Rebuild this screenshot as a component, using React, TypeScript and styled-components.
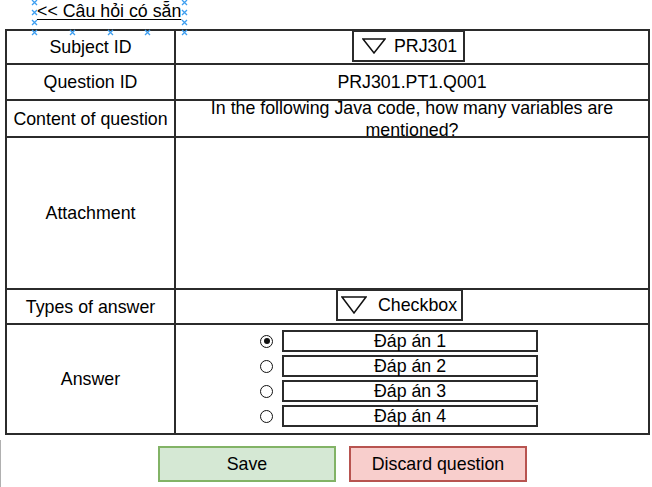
import styled, { createGlobalStyle } from "styled-components";

const GlobalStyle = createGlobalStyle`
  html, body {
    margin: 0;
    padding: 0;
    background: #fff;
  }
  body {
    font-family: "Liberation Sans", Arial, sans-serif;
    color: #000;
  }
`;

// Layout
const Page = styled.div`
  position: relative;
  width: 652px;
  height: 487px;
  padding-left: 5px;
  box-sizing: border-box;
  overflow: hidden;
`;

const TopBar = styled.div`
  height: 29px;
  padding: 1px 0 0 32px;
  box-sizing: border-box;
`;

const BackLink = styled.a`
  display: inline-block;
  font-size: 17.8px;
  line-height: 20px;
  color: #000;
  text-decoration: underline;
  text-underline-offset: 2px;
  cursor: pointer;
`;

const Markers = styled.div`
  position: absolute;
  left: 0;
  top: 0;
  width: 0;
  height: 0;
  pointer-events: none;
`;

const Marker = styled.svg<{ x: number; y: number }>`
  position: absolute;
  left: ${({ x }) => x - 3}px;
  top: ${({ y }) => y - 3}px;
  width: 7px;
  height: 7px;
  z-index: 5;
`;

const Table = styled.div`
  display: grid;
  grid-template-columns: 167px 472px;
  grid-template-rows: 32px 34px 35px 150px 33px 108px;
  gap: 2px;
  padding: 2px;
  width: 645px;
  box-sizing: border-box;
  background: #2b2b2b;
`;

const Cell = styled.div`
  background: #fff;
  display: flex;
  align-items: center;
  justify-content: center;
  text-align: center;
  font-size: 17.8px;
  line-height: 20px;
  min-width: 0;
`;

const QuestionText = styled.div`
  padding: 0 10px;
  line-height: 22px;
`;

const SelectCell = styled.div<{ left: number }>`
  background: #fff;
  display: flex;
  align-items: flex-start;
  padding-left: ${({ left }) => left}px;
`;

const Dropdown = styled.div<{ w: number; tri: number; textGap: number }>`
  width: ${({ w }) => w}px;
  height: 32px;
  margin-top: -1px;
  border: 2px solid #2b2b2b;
  box-sizing: border-box;
  display: flex;
  align-items: center;
  padding-left: ${({ tri }) => tri}px;
  gap: ${({ textGap }) => textGap}px;
  font-size: 17.8px;
  background: #fff;
`;

const AnswerCell = styled.div`
  background: #fff;
  display: flex;
  flex-direction: column;
  gap: 3px;
  padding: 5px 0 0 84px;
`;

const AnswerRow = styled.div`
  display: flex;
  align-items: center;
  gap: 9px;
  height: 22px;
`;

const Radio = styled.span<{ checked?: boolean }>`
  width: 13px;
  height: 13px;
  border: 1.6px solid #111;
  border-radius: 50%;
  box-sizing: border-box;
  display: flex;
  align-items: center;
  justify-content: center;
  &::after {
    content: "";
    display: ${({ checked }) => (checked ? "block" : "none")};
    width: 6px;
    height: 6px;
    border-radius: 50%;
    background: #111;
  }
`;

const AnswerBox = styled.div`
  width: 256px;
  height: 22px;
  border: 2px solid #2b2b2b;
  box-sizing: border-box;
  display: flex;
  align-items: center;
  justify-content: center;
  font-size: 17.8px;
`;

const Actions = styled.div`
  display: flex;
  gap: 13px;
  margin-top: 11px;
  padding-left: 153px;
`;

const Button = styled.button<{ variant: "save" | "discard" }>`
  width: 178px;
  height: 36px;
  font-family: inherit;
  font-size: 17.8px;
  color: #000;
  cursor: pointer;
  background: ${({ variant }) => (variant === "save" ? "#d5e8d4" : "#f8cecc")};
  border: 2px solid ${({ variant }) => (variant === "save" ? "#82b366" : "#b85450")};
`;

const EdgeLine = styled.div`
  position: absolute;
  left: 0;
  top: 440px;
  bottom: 0;
  width: 1px;
  background: #b0b0b0;
`;

const Triangle = ({ w, h }: { w: number; h: number }) => (
  <svg width={w} height={h} viewBox={`0 0 ${w} ${h}`}>
    <polygon
      points={`1,1 ${w - 1},1 ${w / 2},${h - 1}`}
      fill="none"
      stroke="#111"
      strokeWidth="1.5"
    />
  </svg>
);

const markerPoints: [number, number][] = [
  [34, 2], [184, 2],
  [34, 12], [184, 12],
  [34, 22], [184, 22],
  [34, 32], [72, 32], [110, 32], [147, 32], [184, 32],
];

const answers = ["Đáp án 1", "Đáp án 2", "Đáp án 3", "Đáp án 4"];

export default function App() {
  return (
    <>
      <GlobalStyle />
      <Page>
        <TopBar>
          <BackLink>&lt;&lt; Câu hỏi có sẵn</BackLink>
        </TopBar>
        <Markers>
          {markerPoints.map(([x, y], i) => (
            <Marker key={i} x={x} y={y} viewBox="0 0 7 7">
              <path d="M1 1 L6 6 M6 1 L1 6" stroke="#3d9ef0" strokeWidth="1.3" />
            </Marker>
          ))}
        </Markers>

        <Table>
          <Cell>Subject ID</Cell>
          <SelectCell left={176}>
            <Dropdown w={113} tri={8} textGap={8}>
              <Triangle w={24} h={16} />
              PRJ301
            </Dropdown>
          </SelectCell>

          <Cell>Question ID</Cell>
          <Cell>PRJ301.PT1.Q001</Cell>

          <Cell>Content of question</Cell>
          <Cell>
            <QuestionText>
              In the following Java code, how many variables are mentioned?
            </QuestionText>
          </Cell>

          <Cell>Attachment</Cell>
          <Cell />

          <Cell>Types of answer</Cell>
          <SelectCell left={160}>
            <Dropdown w={127} tri={3} textGap={11}>
              <Triangle w={26} h={18} />
              Checkbox
            </Dropdown>
          </SelectCell>

          <Cell>Answer</Cell>
          <AnswerCell>
            {answers.map((a, i) => (
              <AnswerRow key={a}>
                <Radio checked={i === 0} />
                <AnswerBox>{a}</AnswerBox>
              </AnswerRow>
            ))}
          </AnswerCell>
        </Table>

        <Actions>
          <Button variant="save">Save</Button>
          <Button variant="discard">Discard question</Button>
        </Actions>
        <EdgeLine />
      </Page>
    </>
  );
}
